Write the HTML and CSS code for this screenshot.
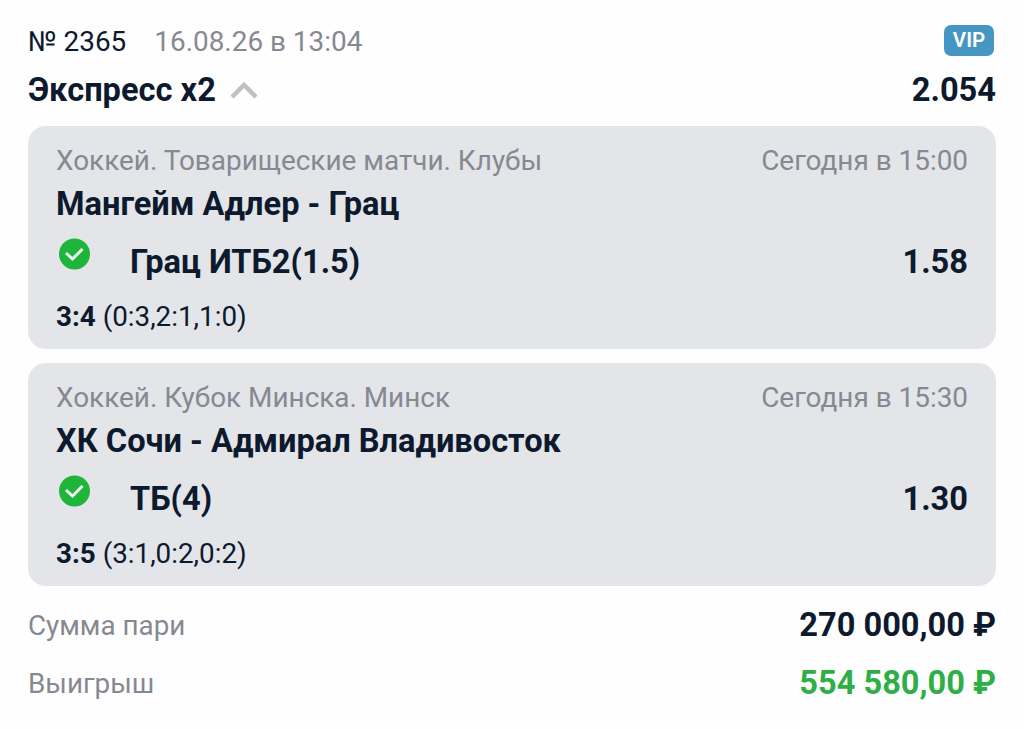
FILE: index.html
```
<!DOCTYPE html>
<html lang="ru">
  <head>
    <meta charset="UTF-8" />
    <meta name="viewport" content="width=device-width, initial-scale=1.0" />
    <title>Экспресс x2</title>
    <link rel="stylesheet" href="styles.css">
  </head>
  <body>
    <div class="coupon">
      <div class="row meta">
        <div class="meta-left">
          <span class="number">№ 2365</span>
          <span class="date">16.08.26 в 13:04</span>
        </div>
        <span class="vip">VIP</span>
      </div>

      <div class="row title">
        <div class="title-left">
          <h1>Экспресс x2</h1>
          <svg class="chevron" viewBox="0 0 28 18">
            <path d="M2 16 L14 4 L26 16" />
          </svg>
        </div>
        <span class="total">2.054</span>
      </div>

      <div class="event">
        <div class="row event-head">
          <span class="league">Хоккей. Товарищеские матчи. Клубы</span>
          <span class="time">Сегодня в 15:00</span>
        </div>
        <h2>Мангейм Адлер - Грац</h2>
        <div class="row bet">
          <svg class="check" viewBox="0 0 32 32">
            <circle cx="16.5" cy="16" r="15.5" />
            <path d="M8 15 L14.5 21 L24.5 11" />
          </svg>
          <span class="pick">Грац ИТБ2(1.5)</span>
          <span class="odds">1.58</span>
        </div>
        <p class="score"><b>3:4</b> <span>(0:3,2:1,1:0)</span></p>
      </div>

      <div class="event">
        <div class="row event-head">
          <span class="league">Хоккей. Кубок Минска. Минск</span>
          <span class="time">Сегодня в 15:30</span>
        </div>
        <h2>ХК Сочи - Адмирал Владивосток</h2>
        <div class="row bet">
          <svg class="check" viewBox="0 0 32 32">
            <circle cx="16.5" cy="16" r="15.5" />
            <path d="M8 15 L14.5 21 L24.5 11" />
          </svg>
          <span class="pick">ТБ(4)</span>
          <span class="odds">1.30</span>
        </div>
        <p class="score"><b>3:5</b> <span>(3:1,0:2,0:2)</span></p>
      </div>

      <div class="row sum">
        <span class="label">Сумма пари</span>
        <span class="amount">270 000,00 ₽</span>
      </div>
      <div class="row sum">
        <span class="label">Выигрыш</span>
        <span class="amount win">554 580,00 ₽</span>
      </div>
    </div>
  </body>
</html>
```
FILE: styles.css
```
* {
  margin: 0;
  padding: 0;
  box-sizing: border-box;
}

body {
  font-family: Roboto, sans-serif;
  background-color: #fefefe;
  color: #0d1a2e;
}

.coupon {
  padding: 21px 28px 0;
}

.row {
  display: flex;
  justify-content: space-between;
  align-items: center;
}

.meta {
  height: 40px;
  font-size: 27.9px;
}

.meta-left {
  display: flex;
  gap: 28px;
}

.date,
.label,
.event-head {
  color: #868992;
}

.vip {
  width: 50px;
  height: 31px;
  margin: 0 2px 1px 0;
  border-radius: 7px;
  background-color: #4596c3;
  color: white;
  font-size: 20.5px;
  font-weight: 600;
  line-height: 31px;
  text-align: center;
}

.title {
  height: 55px;
  margin-bottom: 10px;
  padding-top: 2px;
}

.title-left {
  display: flex;
  align-items: center;
  gap: 14px;
}

h1,
.total,
.amount {
  font-size: 32.6px;
  font-weight: bold;
}

.chevron {
  width: 28px;
  height: 18px;
  fill: none;
  stroke: #c0c0c1;
  stroke-width: 4.5;
}

.event {
  height: 223px;
  margin-bottom: 14px;
  padding: 13px 28px;
  border-radius: 18px;
  background-color: #e4e5e9;
}

.event-head {
  height: 42px;
  font-size: 27.9px;
}

h2 {
  font-size: 32.6px;
  line-height: 46px;
}

.bet {
  height: 70px;
  font-size: 32.6px;
  font-weight: bold;
}

.check {
  width: 32px;
  height: 32px;
  margin: 0 40px 16px 2px;
  fill: #1fb53b;
}

.check path {
  fill: none;
  stroke: #f0faf2;
  stroke-width: 3;
}

.odds {
  margin-left: auto;
}

.score {
  font-size: 27.8px;
  line-height: 40px;
}

.sum {
  height: 58px;
  padding-bottom: 6px;
}

.sum:nth-last-child(2) {
  margin-top: -1px;
}

.label {
  font-size: 27.8px;
}
.win {
  color: #2eae47;
}
```
